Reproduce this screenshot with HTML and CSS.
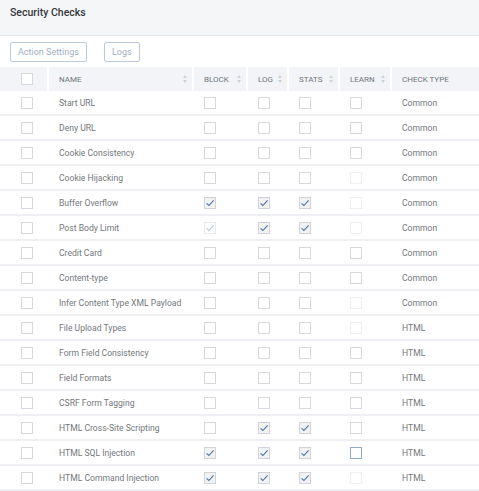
FILE: index.html
```html
<!DOCTYPE html>
<html>
<head>
<meta charset="utf-8">
<link rel="stylesheet" href="styles.css">
</head>
<body>
<div class="page">
  <div class="titlebar"><span class="title">Security Checks</span></div>
  <div class="toolbar">
    <button class="btn">Action Settings</button>
    <button class="btn">Logs</button>
  </div>
  <table class="grid">
    <colgroup>
      <col class="c0"><col class="c1"><col class="c2"><col class="c3"><col class="c4"><col class="c5"><col class="c6">
    </colgroup>
    <thead>
      <tr>
        <th class="first"><span class="cb"></span></th>
        <th><div class="hc">NAME<span class="sort"></span></div></th>
        <th><div class="hc">BLOCK<span class="sort"></span></div></th>
        <th><div class="hc">LOG<span class="sort"></span></div></th>
        <th><div class="hc">STATS<span class="sort"></span></div></th>
        <th><div class="hc">LEARN<span class="sort"></span></div></th>
        <th><div class="hc">CHECK TYPE</div></th>
      </tr>
    </thead>
    <tbody id="rows"></tbody>
  </table>
</div>
<script src="app.js"></script>
</body>
</html>
```

FILE: app.js
```js
// b,l,s: 0 unchecked, 1 checked, 2 faint-checked; learn: 0 normal, 1 disabled, 2 focused
var data = [
  ["Start URL",0,0,0,0,"Common"],
  ["Deny URL",0,0,0,0,"Common"],
  ["Cookie Consistency",0,0,0,0,"Common"],
  ["Cookie Hijacking",0,0,0,1,"Common"],
  ["Buffer Overflow",1,1,1,1,"Common"],
  ["Post Body Limit",2,1,1,1,"Common"],
  ["Credit Card",0,0,0,0,"Common"],
  ["Content-type",0,0,0,0,"Common"],
  ["Infer Content Type XML Payload",0,0,0,1,"Common"],
  ["File Upload Types",0,0,0,1,"HTML"],
  ["Form Field Consistency",0,0,0,0,"HTML"],
  ["Field Formats",0,0,0,0,"HTML"],
  ["CSRF Form Tagging",0,0,0,0,"HTML"],
  ["HTML Cross-Site Scripting",0,1,1,0,"HTML"],
  ["HTML SQL Injection",1,1,1,2,"HTML"],
  ["HTML Command Injection",1,1,1,1,"HTML"]
];
var tick = '<svg viewBox="0 0 12 12" width="12" height="12"><path d="M2.6 6.3 L4.9 8.5 L9.6 3.4" fill="none" stroke="currentColor" stroke-width="1.1"/></svg>';
function cb(v) {
  if (v === 1) return '<span class="cb on">' + tick + '</span>';
  if (v === 2) return '<span class="cb faint">' + tick + '</span>';
  return '<span class="cb"></span>';
}
function learn(v) {
  if (v === 1) return '<span class="cb dis"></span>';
  if (v === 2) return '<span class="cb focus"></span>';
  return '<span class="cb"></span>';
}
var html = "";
data.forEach(function (r) {
  html += '<tr><td class="first">' + cb(0) + '</td><td>' + r[0] + '</td><td>' + cb(r[1]) +
    '</td><td>' + cb(r[2]) + '</td><td>' + cb(r[3]) + '</td><td>' + learn(r[4]) +
    '</td><td>' + r[5] + '</td></tr>';
});
document.getElementById("rows").innerHTML = html;
```

FILE: styles.css
```css
html, body {
  margin: 0;
  padding: 0;
  background: #ffffff;
}
body {
  font-family: Roboto, "Liberation Sans", sans-serif;
  color: #74777c;
}
.page {
  width: 479px;
}
.titlebar {
  height: 36px;
  background: #f5f6f8;
  border-bottom: 1px solid #e3e6eb;
  box-sizing: border-box;
  padding: 4px 10px 0 10px;
  line-height: 13px;
}
.title {
  font-size: 10.5px;
  font-weight: 500;
  color: #34383d;
}
.toolbar {
  display: flex;
  gap: 17px;
  padding: 6px 10px 5px 10px;
  height: 31px;
  box-sizing: border-box;
}
.btn {
  font-family: Roboto, "Liberation Sans", sans-serif;
  font-size: 9px;
  color: #a1b0c3;
  background: #ffffff;
  border: 1px solid #bccadb;
  border-radius: 2px;
  height: 20px;
  padding: 0 7px;
  margin: 0;
  line-height: 18px;
}
.grid {
  border-collapse: collapse;
  table-layout: fixed;
  width: 479px;
}
.c0 { width: 48px; }
.c1 { width: 145px; }
.c2 { width: 54px; }
.c3 { width: 41px; }
.c4 { width: 51px; }
.c5 { width: 52px; }
.c6 { width: 88px; }
th {
  background: #f3f4f7;
  height: 24px;
  padding: 0 0 0 10px;
  border-left: 2px solid #ffffff;
  text-align: left;
  font-weight: 400;
  font-size: 8px;
  color: #71757c;
  vertical-align: middle;
}
th.first {
  border-left: none;
  padding-left: 21px;
}
.hc {
  display: flex;
  align-items: center;
  justify-content: space-between;
  padding-right: 4px;
  white-space: nowrap;
}
.sort {
  width: 5px;
  height: 8px;
  position: relative;
  flex: none;
}
.sort::before, .sort::after {
  content: "";
  position: absolute;
  left: 0;
  border-left: 2.5px solid transparent;
  border-right: 2.5px solid transparent;
}
.sort::before {
  top: 0;
  border-bottom: 3px solid #cdd0d5;
}
.sort::after {
  bottom: 0;
  border-top: 3px solid #cdd0d5;
}
td {
  height: 23px;
  padding: 0 0 0 10px;
  border-left: 2px solid transparent;
  border-bottom: 2px solid #eff0f3;
  font-size: 8.6px;
  color: #74777c;
  vertical-align: middle;
  white-space: nowrap;
  overflow: hidden;
}
td.first {
  border-left: none;
  padding-left: 21px;
}
.cb {
  display: block;
  width: 12px;
  height: 12px;
  box-sizing: border-box;
  border: 1px solid #d6d8dc;
  background: #ffffff;
  position: relative;
}
.cb svg {
  position: absolute;
  left: -1px;
  top: -1px;
}
.cb.on {
  background: #f1f2f4;
  border-color: #d0d3d7;
  color: #4b70a6;
}
.cb.faint {
  border-color: #e9eaec;
  color: #b7c8dd;
}
.cb.dis {
  border-color: #eeeff1;
}
.cb.focus {
  border-color: #93acce;
}
```
